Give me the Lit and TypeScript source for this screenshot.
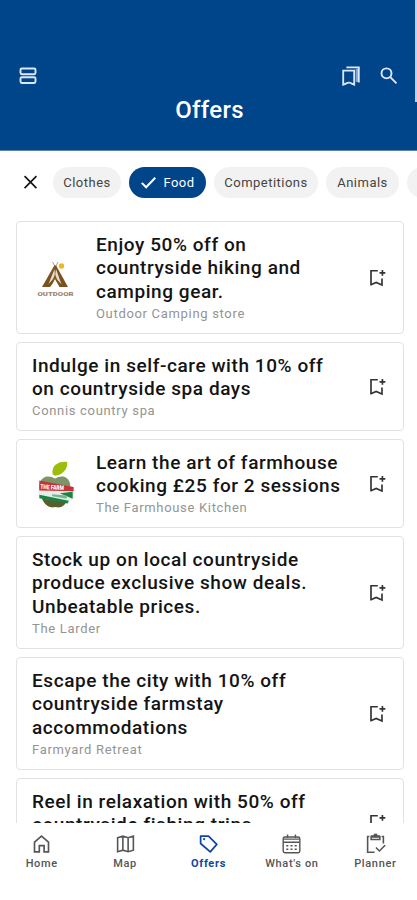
import { LitElement, html, css, svg, nothing } from "lit";
import { customElement } from "lit/decorators.js";
import { classMap } from "lit/directives/class-map.js";

interface Offer {
  lines: string[];
  vendor: string;
  logo?: "outdoor" | "apple";
}

const offers: Offer[] = [
  { lines: ["Enjoy 50% off on", "countryside hiking and", "camping gear."], vendor: "Outdoor Camping store", logo: "outdoor" },
  { lines: ["Indulge in self-care with 10% off", "on countryside spa days"], vendor: "Connis country spa" },
  { lines: ["Learn the art of farmhouse", "cooking £25 for 2 sessions"], vendor: "The Farmhouse Kitchen", logo: "apple" },
  { lines: ["Stock up on local countryside", "produce exclusive show deals.", "Unbeatable prices."], vendor: "The Larder" },
  { lines: ["Escape the city with 10% off", "countryside farmstay", "accommodations"], vendor: "Farmyard Retreat" },
  { lines: ["Reel in relaxation with 50% off", "countryside fishing trips"], vendor: "" },
];

const stroke = (d: unknown, w = 1.6) => html`<svg viewBox="0 0 24 24" fill="none" stroke="currentColor" stroke-width=${w}>${d}</svg>`;

const icons = {
  rows: stroke(svg`<rect x="3" y="3" width="18" height="6.800" rx="1.600"/><rect x="3" y="13.500" width="18" height="6.800" rx="1.600"/>`, 2.3),
  bookmarks: stroke(svg`<path d="M3.500 6.200h12v15.300l-2.500-1.100c-1-1.600-5-1.600-6.500 0L3.500 21.500z"/><path d="M7 2.600h13.500V19" stroke-width="2"/><path d="M18.600 4v14.500" stroke-width="3" opacity=".6"/>`, 2),
  search: stroke(svg`<circle cx="9" cy="8.800" r="6"/><path d="M13.500 13.300l7.500 7.500"/>`, 2.3),
  close: stroke(svg`<path d="M4.500 4l15 15M19.500 4l-15 15"/>`, 2.1),
  check: stroke(svg`<path d="M3.500 12.500l5.500 5.500L20.500 6"/>`, 2.6),
  save: stroke(svg`<path d="M13 3.300H4.800v17.500M4 20.300L11 17.300l7 3V12.500"/><path d="M18.500 2.300v7M15 5.800h7"/>`, 2),
  home: stroke(svg`<path d="M4 21.500V10.300L12 3.500l8 6.800v11.200h-5v-7H9.500v7z"/>`, 1.9),
  map: stroke(svg`<path d="M3 5.300l6-1.700 6 1.700 6-1.700v16l-6 1.700-6-1.700-6 1.700zM9 3.600v16M15 5.300v16"/>`, 1.8),
  tag: stroke(svg`<path d="M3 3.500h9L21.500 13 14 21.500 3 12z" stroke-linejoin="round"/><circle cx="7" cy="7" r=".5" stroke-width="1.500"/>`, 2),
  calendar: stroke(svg`<rect x="2.500" y="4.500" width="19" height="18" rx="2"/><path d="M3 7h18M3 10.500h18M7.500 1.800v4M16.500 1.800v4"/><path d="M6 14.500h12M6 18.500h12" stroke-dasharray="2.400 2.400"/>`, 1.6),
  planner: stroke(svg`<path d="M11 22H3V4h2M19 4h2v8"/><path d="M7 3v4.500h10V3"/><path d="M7 4h10" stroke-width="3"/><path d="M12 .8v3" stroke-width="4"/><path d="M12.500 16.500l4 4 6.500-6.500"/>`, 1.8),
};

const outdoorLogo = html`<svg viewBox="0 0 40 40">
  <path d="M16.500 4l3 5 2.500-5" stroke="#aaa08f" fill="none"/>
  <path d="M18.300 7.500h1.800L32 29H23.500C22 26 20 23 19 21c-1.500 3-3 6-5 8H6z" fill="#7a5220"/>
  <path d="M18.500 11l-6 15 6.500-7 6.500 7.500L20 11l-1 7z" fill="#fff" opacity=".8"/>
  <path d="M16 24l3-8 3 8-3-4z" fill="#8a5a1c"/>
  <circle cx="25.500" cy="8" r="2.700" fill="#f5b51b"/>
  <text x="1.500" y="37.600" textLength="36" lengthAdjust="spacingAndGlyphs" font-family="Roboto, sans-serif" font-weight="900" font-size="5.800" fill="#9c856c">OUTDOOR</text>
</svg>`;

const appleLogo = html`<svg viewBox="0 0 40 50">
  <path d="M16.500 14.500C15 6 22 1 31.500 2 32 10 26 15.500 19 16z" fill="#9dbd0c"/>
  <path d="M19 19c6-4 14-3 15.500 6 1 9-2 18-7.500 22-3 2-5 1-8 1s-5 .7-8-1.500C5 42 2 33 3 25c2-9 10-10 16-6z" fill="#7c9566"/>
  <path d="M6 39l25 3c-3 5-6 7-12 6-5 1-10-1-13-9z" fill="#56602c"/>
  <path d="M2 30l36 0v9l-5 4-30-4z" fill="#e5eee6"/>
  <path d="M3 21l35 6.500v4.500L3 31z" fill="#c5333b"/>
  <path d="M3 35.500l30 6-1 3-29-5.500zM24 34l13-1.500v7z" fill="#198344"/>
  <path d="M16 35l15 1.200v3.300L16 37z" fill="#79b58c"/>
  <text x="4" y="29.500" transform="rotate(3 5 29)" textLength="24" lengthAdjust="spacingAndGlyphs" font-family="Roboto, sans-serif" font-weight="900" font-size="6.500" fill="#fff">THE FARM</text>
</svg>`;

@customElement("app-root")
export class AppRoot extends LitElement {
  static styles = css`
    :host { display: flex; flex-direction: column; position: relative; width: 417px; height: 900px; overflow: hidden; background: #fff; color: #141414; font-family: Roboto, sans-serif; }
    svg { display: block; width: 100%; height: 100%; flex: none; }
    header { flex: none; box-sizing: border-box; height: 151px; padding: 65px 18px 0; background: #004489; color: #fff; border-bottom: 1px solid #5b7fb4; }
    .bar { display: flex; align-items: center; height: 21px; color: #dce7fb; }
    .bar span { width: 20px; height: 20px; }
    .bar .marks { width: 22px; height: 22px; margin: 0 17px 0 auto; }
    h1 { margin: 9px 0 0 2px; text-align: center; font-size: 24px; line-height: 31px; font-weight: 500; letter-spacing: .3px; }
    .scroll { position: absolute; right: 0; top: 0; width: 2px; height: 102px; background: #c3cdea; }
    .chips { flex: none; display: flex; align-items: center; height: 31px; padding: 16px 0 0 21px; margin-bottom: 23px; overflow: hidden; }
    .close { width: 19px; height: 19px; margin-right: 13px; flex: none; }
    .chip { box-sizing: border-box; flex: none; display: flex; align-items: center; justify-content: center; height: 31px; margin-right: 8px; border-radius: 16px; background: #f2f2f2; color: #444; font-size: 13px; letter-spacing: .48px; }
    .c0 { width: 68px; } .c1 { width: 77px; } .c2 { width: 104px; } .c3 { width: 73px; } .c4 { width: 70px; }
    .chip.on { background: #004489; color: #fff; }
    .chip i { width: 19px; height: 19px; margin: 0 5px 0 -1px; }
    main { flex: 1; min-height: 0; overflow: hidden; display: flex; flex-direction: column; gap: 8px; padding: 0 13px 0 16px; }
    .card { flex: none; box-sizing: border-box; display: flex; align-items: center; height: 89px; padding: 1px 16px 0 15px; border: 1.500px solid #e2e2e2; border-radius: 4px; }
    .card.tall { height: 113px; }
    .logo { width: 64px; flex: none; }
    .logo div { width: 40px; height: 40px; margin-left: 4px; }
    .logo .apple { width: 40px; height: 49px; }
    .body { flex: 1; white-space: nowrap; padding-top: 1px; }
    h2 { margin: 0; font-size: 19px; line-height: 23.400px; font-weight: 500; letter-spacing: .57px; }
    p { margin: 1px 0 0; min-height: 20px; font-size: 13px; line-height: 20px; letter-spacing: .68px; color: #949494; }
    .save { width: 20px; height: 20px; flex: none; color: #333; }
    nav { flex: none; display: flex; height: 77px; background: #fff; color: #555; }
    .tab { flex: 1; display: flex; flex-direction: column; align-items: center; font-size: 11px; line-height: 14px; font-weight: 500; letter-spacing: .65px; }
    .tab i { width: 21px; height: 21px; margin: 10px 0 3px; }
    .tab.on { color: #0d479f; font-weight: 700; }
  `;

  render() {
    return html`
      <header>
        <div class="bar"><span>${icons.rows}</span><span class="marks">${icons.bookmarks}</span><span>${icons.search}</span></div>
        <h1>Offers</h1>
      </header>
      <div class="scroll"></div>
      <div class="chips">
        <div class="close">${icons.close}</div>
        ${["Clothes", "Food", "Competitions", "Animals", ""].map((c, i) => html`<div class="chip c${i} ${i === 1 ? "on" : ""}">${i === 1 ? html`<i>${icons.check}</i>` : nothing}${c}</div>`)}
      </div>
      <main>
        ${offers.map((o) => html`<article class=${classMap({ card: true, tall: o.lines.length === 3 })}>
          ${o.logo ? html`<div class="logo"><div class=${o.logo}>${o.logo === "apple" ? appleLogo : outdoorLogo}</div></div>` : nothing}
          <div class="body"><h2>${o.lines.map((l, i) => html`${i ? html`<br>` : nothing}${l}`)}</h2><p>${o.vendor}</p></div>
          <div class="save">${icons.save}</div>
        </article>`)}
      </main>
      <nav>
        ${([["Home", icons.home], ["Map", icons.map], ["Offers", icons.tag], ["What's on", icons.calendar], ["Planner", icons.planner]] as const).map(([name, icon]) => html`<div class=${classMap({ tab: true, on: name === "Offers" })}><i>${icon}</i>${name}</div>`)}
      </nav>`;
  }
}
